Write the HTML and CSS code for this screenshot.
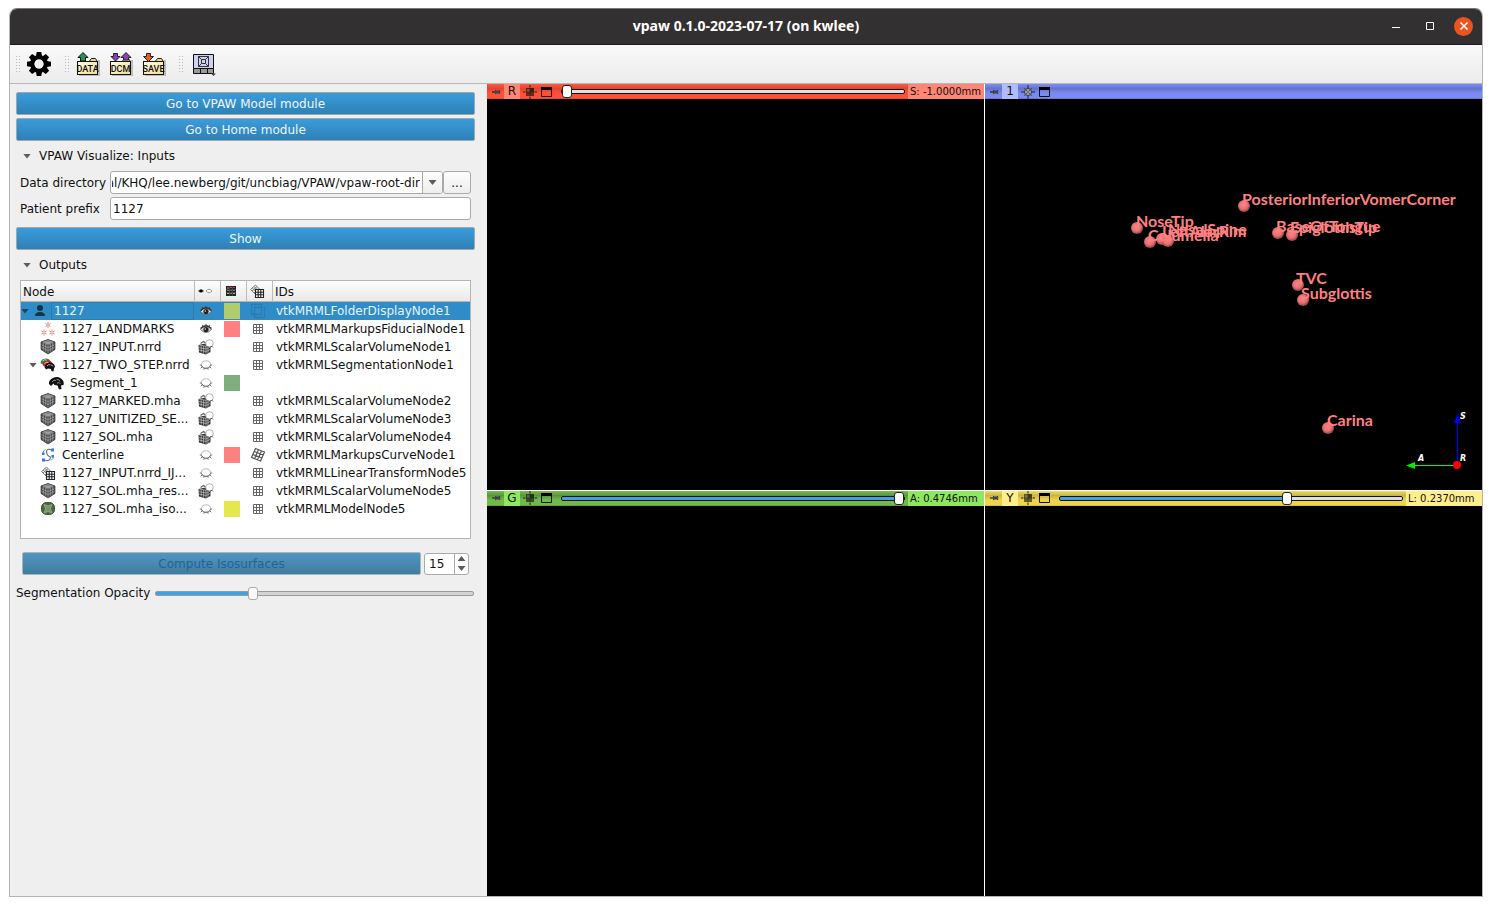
FILE: index.html
```html
<!DOCTYPE html>
<html lang="en">
<head>
<meta charset="utf-8">
<title>vpaw 0.1.0-2023-07-17 (on kwlee)</title>
<link rel="stylesheet" href="styles.css">
</head>
<body>
<svg class="defs" aria-hidden="true">
  <defs>
    <radialGradient id="bead" cx=".45" cy=".4" r=".6"><stop offset="0" stop-color="#ff8585"/><stop offset=".6" stop-color="#e87070"/><stop offset="1" stop-color="#8f4040"/></radialGradient>
    <linearGradient id="folder" x1="0" y1="0" x2="1" y2="1"><stop offset="0" stop-color="#fffbe0"/><stop offset="1" stop-color="#f0dc9a"/></linearGradient>
  </defs>
  <symbol id="i-folder" viewBox="0 0 24 24">
    <path d="M3 23h20v-15" stroke="#9a9a9a" stroke-width="2" fill="none" opacity=".6"/>
    <path d="M13.500 9l2-2.500h4l1.500 2.500" fill="#f0d878" stroke="#222"/>
    <rect x="1.500" y="9.500" width="20" height="13" fill="url(#folder)" stroke="#111"/>
  </symbol>
  <symbol id="i-cube" viewBox="0 0 16 16">
    <path d="M8 0.500l7 2.500v7.500L8 15 1 10.500V3z" fill="#484848"/>
    <path d="M8 0.500l7 2.500L8 6 1 3z" fill="#8a8a8a"/>
    <path d="M8 6v9M3.300 4v8M5.700 5v8.500M12.700 4v8M10.300 5v8.500M1 5.500l7 3.200L15 5.500M1 8l7 3.500 7-3.500M3.500 2.100l7 3M12.500 2.100l-7 3" stroke="#b0b0b0" stroke-width=".6" fill="none"/>
    <path d="M8 0.500l7 2.500v7.500L8 15 1 10.500V3z" fill="none" stroke="#333" stroke-width=".7"/>
  </symbol>
  <symbol id="i-vol" viewBox="0 0 16 16">
    <path d="M0.500 6l7-1.500 5 1.500v7L8 15.500 1 13.500z" fill="#333"/>
    <path d="M1 8.500l7 1.500 4-2M1 11l7 1.500 4-2M3.200 6.500v7M5.600 7v7.500M8 7v8.500M10 6.500v8M1 6l7 1.300L12 6" stroke="#c4c4c4" stroke-width=".7" fill="none"/>
    <path d="M2.500 4.500l3-2 2 1.500" stroke="#666" stroke-width="1.300" fill="none"/>
    <circle cx="11.500" cy="4.500" r="3.800" fill="#fff" stroke="#a0a0a0" stroke-width=".8"/>
    <path d="M8.500 7.500q3 2 6-.5M14 7.500l1 1" stroke="#555" fill="none" stroke-width=".9"/>
  </symbol>
  <symbol id="i-eye" viewBox="0 0 16 16">
    <path d="M2.500 8.500q5-6.500 11 0q-5.500 6-11 0z" fill="#ddd" stroke="#555" stroke-width=".8"/>
    <path d="M2.500 7.500q5.500-5.500 11 0M4 4.500l1 1.200M8 3.200v1.500M12 4.500l-1 1.200" fill="none" stroke="#333" stroke-width="1.200"/>
    <circle cx="8" cy="8.500" r="2.600" fill="#222"/><circle cx="7.300" cy="8" r=".8" fill="#ddd"/>
  </symbol>
  <symbol id="i-shut" viewBox="0 0 16 16">
    <ellipse cx="8" cy="7.500" rx="4.500" ry="3.700" fill="#fff" stroke="#b0b0b0" stroke-width=".9"/>
    <path d="M3.500 8.500q1 3 4.500 3t4.500-3M4 10l-1.300 1.300M6.300 11.300l-.5 1.500M9.700 11.300l.5 1.500M12 10l1.300 1.300M1.800 8h1.600M12.600 8h1.600" fill="none" stroke="#666" stroke-width=".9"/>
  </symbol>
  <symbol id="i-grid" viewBox="0 0 16 16">
    <path d="M3.500 3.500h9v9h-9zM6.500 3v10M9.500 3v10M3 6.500h10M3 9.500h10" fill="none" stroke="#666" stroke-width="1"/>
  </symbol>
  <symbol id="i-tilt" viewBox="0 0 16 16">
    <path d="M5.500 1.500l9 3.500-4 9-9-3.500zM8.500 2.700l-4 9M11.500 3.800l-4 9M4.200 4.500l9 3.500M2.800 7.500l9 3.500" fill="none" stroke="#555" stroke-width="1.200"/>
  </symbol>
  <symbol id="i-xform" viewBox="0 0 16 16">
    <path d="M1.500 6.500l5-4.500 5 5-5 4.500zM3.200 5l5 5M5 3.500l5 5M3 8l5-4.500M5 10l5-4.500" fill="#eee" stroke="#777" stroke-width=".9"/>
    <path d="M6.500 6.500h8v8h-8zM9.200 6.500v8M11.800 6.500v8M6.500 9.200h8M6.500 11.800h8" fill="#fff" stroke="#222" stroke-width="1.100"/>
  </symbol>
  <symbol id="i-xform-none" viewBox="0 0 16 16">
    <path d="M1.500 1.500h10v10h-10zM4.500 4.500h10v10h-10z" fill="none" stroke="#2a74a8" stroke-width="1.300" stroke-dasharray="2 1"/>
  </symbol>
  <symbol id="i-brain" viewBox="0 0 16 16">
    <path d="M1 9Q.5 5 5 3Q9 1 13 3.500q3.500 2.500 2.500 6.500l-2.500.5.500 3.500-2.500.5-1.500-4-3-.5L5.500 8.500 3 11z" fill="#111"/>
    <path d="M4 7q2-3 4-1.500M8.500 4.500q3-.5 3.500 2M9 8q2-1 3.500.5" fill="none" stroke="#bbb" stroke-width=".7"/>
  </symbol>
  <symbol id="i-seg" viewBox="0 0 16 16">
    <path d="M.5 6.500Q.5 2 5.500 1.500q4 0 5 3L7 7.500z" fill="#2f7d3b"/>
    <path d="M2.500 8Q3 4 7.500 3.500q4 0 5 3l-6 4.500z" fill="#c42222"/>
    <path d="M2.500 4q2-2 4-1M4.500 6.500q1.500-2 4-1" stroke="#eee" fill="none" stroke-width=".8"/>
    <path d="M4.500 10Q5.500 6 9.500 5.500q4.500 0 5.500 4l-1 2-.5 3-2-.5-.5-2-3-.5-2 1z" fill="#111"/>
    <path d="M7 9q2-2.500 3.500-1M11 8q1.500 0 2 1.500" fill="none" stroke="#ccc" stroke-width=".8"/>
  </symbol>
  <symbol id="i-marks" viewBox="0 0 16 16">
    <path d="M8 1v6M5.400 2.500l5.200 3M5.400 5.500l5.200-3M4 8.500v6M1.400 10l5.200 3M1.400 13l5.200-3M12 8.500v6M9.400 10l5.200 3M9.400 13l5.200-3" stroke="#f08a76" fill="none"/>
    <path d="M8 3.500v1M4 11v1M12 11v1" stroke="#fff"/>
  </symbol>
  <symbol id="i-curve" viewBox="0 0 16 16">
    <path d="M12.500 3Q6 1 6.500 5t4 5q0 5-6.500 3" fill="none" stroke="#777" stroke-width="1.300"/>
    <path d="M3.500 6.500q-1-3 2-4M12.500 8.500q2 3-1.500 5" fill="none" stroke="#5b93dd"/>
    <path d="M11 1.500h3v3h-3zM2 11.500h3v3H2zM2 5.500h2.500V8H2zM11.500 8h2.500v2.500h-2.500z" fill="#2f7ee8"/>
  </symbol>
  <symbol id="i-model" viewBox="0 0 16 16">
    <rect x="1.500" y="1.500" width="13" height="12" rx="5" fill="#46683f" stroke="#38522f"/>
    <path d="M4 3.500l4 1.500 4-1.500-1.500 4 1.500 4.500-4-1.500L4 12l1.500-4.500z" fill="#94b58a" fill-opacity=".6" stroke="#a9c0a0" stroke-width=".6"/>
  </symbol>
  <symbol id="i-person" viewBox="0 0 16 16"><circle cx="8" cy="5" r="3" fill="#17334a"/><path d="M3 13q0-4 5-4t5 4z" fill="#17334a"/></symbol>
  <symbol id="i-palette" viewBox="0 0 12 12"><path d="M1 1h10v10H1z" fill="#222"/><path d="M2 2h2v2H2zM8 2h2v1H8z" fill="#c33"/><path d="M5 2h2v1H5zM8 5h2v1H8z" fill="#a44aa4"/><path d="M5 5h2v1H5z" fill="#3a6fd0"/><path d="M2 5h2v1H2zM5 8h2v1H5z" fill="#3ea64a"/><path d="M2 8h2v1H2zM8 8h2v1H8z" fill="#cdb43a"/><path d="M4.500 1v10M7.500 1v10M1 4.500h10M1 7.500h10" stroke="#555" stroke-width=".6"/></symbol>
  <symbol id="i-pin" viewBox="0 0 10 10"><path d="M1 5h4" stroke="#333" stroke-width="1.300"/><path d="M4 2.500l1.500 1H8V3h1.200v4H8v-.5H5.500L4 7.500z" fill="#444"/></symbol>
  <symbol id="i-fit" viewBox="0 0 14 14"><path d="M7 0v2M7 12v2M0 7h2M12 7h2" stroke="#222"/><path d="M3 3h8v8H3z" fill="#000" fill-opacity=".55"/><path d="M7 3h4v4H7z" fill="#000" fill-opacity=".25"/><path d="M4 4h3v3H4z" fill="#fff" fill-opacity=".2"/><path d="M7 2v10M2 7h10" stroke="#222" stroke-width=".5"/></symbol>
  <symbol id="i-center" viewBox="0 0 14 14"><path d="M7 0v3M7 11v3M0 7h3M11 7h3" stroke="#222"/><circle cx="7" cy="7" r="3.500" fill="#aab" stroke="#333"/><path d="M3 3l8 8M11 3l-8 8" stroke="#444" stroke-width=".8"/><circle cx="7" cy="7" r="1.500" fill="#778"/></symbol>
  <symbol id="i-max" viewBox="0 0 12 12"><path d="M.5 1.500h10v9H.5z" fill="none" stroke="#111"/><path d="M0 1h11v3H0z" fill="#000"/></symbol>
</svg>

<main class="window">
  <header class="titlebar">
    <h1 class="title">vpaw 0.1.0-2023-07-17 (on kwlee)</h1>
    <div class="win-buttons">
      <button class="win-btn" aria-label="Minimize"><svg width="10" height="10"><path d="M1 6.500h8" stroke="#fff"/></svg></button>
      <button class="win-btn" aria-label="Maximize"><svg width="10" height="10"><path d="M1.500 1.500h7v7h-7z" fill="none" stroke="#fff"/></svg></button>
      <button class="win-btn close" aria-label="Close"><svg width="10" height="10"><path d="M1.500 1.500l7 7M8.500 1.500l-7 7" stroke="#fff" stroke-width="1.500"/></svg></button>
    </div>
  </header>

  <nav class="toolbar" aria-label="Main toolbar">
    <i class="grip"></i>
    <button class="tool gear" aria-label="Settings"><svg width="24" height="24" viewBox="0 0 24 24"><g fill="#000"><path id="tooth" d="M9.700 0h4.600l1 6h-6.600z"/><use href="#tooth" transform="rotate(45 12 12)"/><use href="#tooth" transform="rotate(90 12 12)"/><use href="#tooth" transform="rotate(135 12 12)"/><use href="#tooth" transform="rotate(180 12 12)"/><use href="#tooth" transform="rotate(225 12 12)"/><use href="#tooth" transform="rotate(270 12 12)"/><use href="#tooth" transform="rotate(315 12 12)"/></g><circle cx="12" cy="12" r="6.700" fill="none" stroke="#000" stroke-width="4.500"/><circle cx="12" cy="12" r="4.500" fill="#f2f2f2"/></svg></button>
    <i class="grip"></i>
    <button class="tool data" aria-label="Add data"><svg width="24" height="24" viewBox="0 0 24 24"><use href="#i-folder"/><path d="M7 .5l5 5H9.500v3.500h-5v-3.500H2z" fill="#2e8b57" stroke="#111"/><text x="11.500" y="20" class="cap">DATA</text></svg></button>
    <button class="tool" aria-label="DICOM"><svg width="24" height="24" viewBox="0 0 24 24"><use href="#i-folder"/><path d="M4.500 1.500h4v3H11L6.500 9 2 4.500h2.500zM17 .5l5 5h-2.500V8h-5V5.500H12z" fill="#8b3fb8" stroke="#222"/><text x="11.500" y="20" class="cap">DCM</text></svg></button>
    <button class="tool" aria-label="Save"><svg width="24" height="24" viewBox="0 0 24 24"><use href="#i-folder"/><path d="M4.500 1.500h4v3H11.500L6.500 9.500l-5-5h3z" fill="#e8601c" stroke="#222"/><text x="11.500" y="20" class="cap">SAVE</text></svg></button>
    <i class="grip late"></i>
    <button class="tool layout" aria-label="View layout"><svg width="24" height="24" viewBox="0 0 24 24"><path d="M1.500 2.500h20v14h-20z" fill="#cfd1f2" stroke="#111"/><path d="M1.500 16.500h20v5h-20zM8.500 16.500v5M15.500 16.500v5" fill="#999" stroke="#111"/><path d="M6.500 4.500h10v10h-10zM9.500 7.500h4v4h-4zM6.500 4.500l3 3M16.500 4.500l-3 3M6.500 14.500l3-3M16.500 14.500l-3-3" fill="none" stroke="#333"/><path d="M19 21.500h5L21.500 24z" fill="#444"/></svg></button>
  </nav>

  <div class="content">
    <section class="panel">
      <button class="btn">Go to VPAW Model module</button>
      <button class="btn">Go to Home module</button>

      <button class="section"><i class="tri"></i>VPAW Visualize: Inputs</button>
      <div class="fields">
        <label for="dir">Data directory</label>
        <div class="dir-row">
          <div class="combo"><input id="dir" type="text" value="al/KHQ/lee.newberg/git/uncbiag/VPAW/vpaw-root-dir"><button aria-label="Recent directories"><i class="tri"></i></button></div>
          <button class="browse" aria-label="Browse">...</button>
        </div>
        <label for="prefix">Patient prefix</label>
        <input id="prefix" class="box" type="text" value="1127">
      </div>
      <button class="btn show">Show</button>

      <button class="section"><i class="tri"></i>Outputs</button>
      <div class="tree">
        <table>
          <colgroup><col class="c-node"><col class="c-icon"><col class="c-icon"><col class="c-icon"><col></colgroup>
          <thead><tr><th>Node</th>
            <th class="ic" aria-label="Visibility"><svg width="16" height="16" viewBox="0 0 16 16"><path d="M1 8q3-3.500 6 0q-3 3-6 0z" fill="#444"/><circle cx="4" cy="8" r="1.300" fill="#000"/><path d="M9 8q3-3.500 6 0q-3 3.500-6 0z" fill="#fff" stroke="#999"/></svg></th>
            <th class="ic" aria-label="Color"><svg width="12" height="12"><use href="#i-palette"/></svg></th>
            <th class="ic" aria-label="Transform"><svg width="16" height="16"><use href="#i-xform"/></svg></th><th>IDs</th></tr></thead>
          <tbody>
            <tr class="sel"><td><div class="node l0"><i class="tri"></i><svg><use href="#i-person"/></svg><span>1127</span></div></td><td class="ic"><svg><use href="#i-eye"/></svg></td><td class="ic"><i class="sw olive"></i></td><td class="ic"><svg><use href="#i-xform-none"/></svg></td><td>vtkMRMLFolderDisplayNode1</td></tr>
            <tr><td><div class="node"><svg><use href="#i-marks"/></svg><span>1127_LANDMARKS</span></div></td><td class="ic"><svg><use href="#i-eye"/></svg></td><td class="ic"><i class="sw pink"></i></td><td class="ic"><svg><use href="#i-grid"/></svg></td><td>vtkMRMLMarkupsFiducialNode1</td></tr>
            <tr><td><div class="node"><svg><use href="#i-cube"/></svg><span>1127_INPUT.nrrd</span></div></td><td class="ic"><svg><use href="#i-vol"/></svg></td><td></td><td class="ic"><svg><use href="#i-grid"/></svg></td><td>vtkMRMLScalarVolumeNode1</td></tr>
            <tr><td><div class="node open"><i class="tri"></i><svg><use href="#i-seg"/></svg><span>1127_TWO_STEP.nrrd</span></div></td><td class="ic"><svg><use href="#i-shut"/></svg></td><td></td><td class="ic"><svg><use href="#i-grid"/></svg></td><td>vtkMRMLSegmentationNode1</td></tr>
            <tr><td><div class="node l2"><svg><use href="#i-brain"/></svg><span>Segment_1</span></div></td><td class="ic"><svg><use href="#i-shut"/></svg></td><td class="ic"><i class="sw green"></i></td><td></td><td></td></tr>
            <tr><td><div class="node"><svg><use href="#i-cube"/></svg><span>1127_MARKED.mha</span></div></td><td class="ic"><svg><use href="#i-vol"/></svg></td><td></td><td class="ic"><svg><use href="#i-grid"/></svg></td><td>vtkMRMLScalarVolumeNode2</td></tr>
            <tr><td><div class="node"><svg><use href="#i-cube"/></svg><span>1127_UNITIZED_SE...</span></div></td><td class="ic"><svg><use href="#i-vol"/></svg></td><td></td><td class="ic"><svg><use href="#i-grid"/></svg></td><td>vtkMRMLScalarVolumeNode3</td></tr>
            <tr><td><div class="node"><svg><use href="#i-cube"/></svg><span>1127_SOL.mha</span></div></td><td class="ic"><svg><use href="#i-vol"/></svg></td><td></td><td class="ic"><svg><use href="#i-grid"/></svg></td><td>vtkMRMLScalarVolumeNode4</td></tr>
            <tr><td><div class="node"><svg><use href="#i-curve"/></svg><span>Centerline</span></div></td><td class="ic"><svg><use href="#i-shut"/></svg></td><td class="ic"><i class="sw pink"></i></td><td class="ic"><svg><use href="#i-tilt"/></svg></td><td>vtkMRMLMarkupsCurveNode1</td></tr>
            <tr><td><div class="node"><svg><use href="#i-xform"/></svg><span>1127_INPUT.nrrd_IJ...</span></div></td><td class="ic"><svg><use href="#i-shut"/></svg></td><td></td><td class="ic"><svg><use href="#i-grid"/></svg></td><td>vtkMRMLLinearTransformNode5</td></tr>
            <tr><td><div class="node"><svg><use href="#i-cube"/></svg><span>1127_SOL.mha_res...</span></div></td><td class="ic"><svg><use href="#i-vol"/></svg></td><td></td><td class="ic"><svg><use href="#i-grid"/></svg></td><td>vtkMRMLScalarVolumeNode5</td></tr>
            <tr><td><div class="node"><svg><use href="#i-model"/></svg><span>1127_SOL.mha_iso...</span></div></td><td class="ic"><svg><use href="#i-shut"/></svg></td><td class="ic"><i class="sw yellow"></i></td><td class="ic"><svg><use href="#i-grid"/></svg></td><td>vtkMRMLModelNode5</td></tr>
          </tbody>
        </table>
      </div>

      <div class="compute">
        <button class="btn" disabled>Compute Isosurfaces</button>
        <div class="spin"><input type="text" inputmode="numeric" value="15" aria-label="Isosurface value"><span class="steps"><button aria-label="Increase"><i class="tri up"></i></button><button aria-label="Decrease"><i class="tri"></i></button></span></div>
      </div>
      <div class="opacity">
        <label for="opacity">Segmentation Opacity</label>
        <input id="opacity" class="slider light" type="range" min="0" max="100" value="30" style="--fill:30%">
      </div>
    </section>

    <section class="views">
      <article class="view red">
        <div class="bar">
          <svg class="pin"><use href="#i-pin"/></svg><b class="tag">R</b><button aria-label="Fit slice"><svg width="14" height="14"><use href="#i-fit"/></svg></button><button aria-label="Maximize view"><svg width="12" height="12"><use href="#i-max"/></svg></button>
          <input class="slider" type="range" aria-label="Slice offset R" min="0" max="100" value="0" style="--fill:0%"><output>S: -1.0000mm</output>
        </div>
        <div class="stage"></div>
      </article>
      <article class="view blue">
        <div class="bar">
          <svg class="pin"><use href="#i-pin"/></svg><b class="tag">1</b><button aria-label="Center view"><svg width="14" height="14"><use href="#i-center"/></svg></button><button aria-label="Maximize view"><svg width="12" height="12"><use href="#i-max"/></svg></button>
        </div>
        <div class="stage">
          <svg class="scene" role="img" aria-label="Airway landmarks">
            <g fill="url(#bead)"><circle cx="152" cy="129" r="6"/><circle cx="177" cy="140" r="6"/><circle cx="183" cy="142" r="6"/><circle cx="165" cy="143" r="6"/><circle cx="259" cy="107" r="6"/><circle cx="293" cy="134" r="6"/><circle cx="307" cy="136" r="6"/><circle cx="313" cy="186" r="6"/><circle cx="318" cy="201" r="6"/><circle cx="343" cy="329" r="6"/></g>
            <g class="marks"><text x="151" y="128">NoseTip</text><text x="177" y="138">LeftAlarRim</text><text x="183" y="136">NasalSpine</text><text x="163" y="142">Columella</text><text x="257" y="106">PosteriorInferiorVomerCorner</text><text x="291" y="133">BaseOfTongue</text><text x="305" y="134">EpiglottisTip</text><text x="311" y="185">TVC</text><text x="316" y="200">Subglottis</text><text x="342" y="327">Carina</text></g>
          </svg>
          <svg class="axes" width="64" height="60" viewBox="0 0 64 60" role="img" aria-label="Orientation axes">
            <path d="M53.500 8v46" stroke="#00f"/><path d="M53.500 3l3.500 9h-7z" fill="#00e"/><path d="M10 54.500h43" stroke="#0f0"/><path d="M2 54.500l9-3.500v7z" fill="#0e0"/><circle cx="53" cy="54" r="4" fill="#f00"/>
            <text x="56" y="8">S</text><text x="14" y="50">A</text><text x="56" y="50">R</text>
          </svg>
        </div>
      </article>
      <article class="view grn">
        <div class="bar">
          <svg class="pin"><use href="#i-pin"/></svg><b class="tag">G</b><button aria-label="Fit slice"><svg width="14" height="14"><use href="#i-fit"/></svg></button><button aria-label="Maximize view"><svg width="12" height="12"><use href="#i-max"/></svg></button>
          <input class="slider" type="range" aria-label="Slice offset G" min="0" max="100" value="100" style="--fill:100%"><output>A: 0.4746mm</output>
        </div>
        <div class="stage"></div>
      </article>
      <article class="view yel">
        <div class="bar">
          <svg class="pin"><use href="#i-pin"/></svg><b class="tag">Y</b><button aria-label="Fit slice"><svg width="14" height="14"><use href="#i-fit"/></svg></button><button aria-label="Maximize view"><svg width="12" height="12"><use href="#i-max"/></svg></button>
          <input class="slider" type="range" aria-label="Slice offset Y" min="0" max="100" value="67" style="--fill:67%"><output>L: 0.2370mm</output>
        </div>
        <div class="stage"></div>
      </article>
    </section>
  </div>
</main>
</body>
</html>
```

FILE: styles.css
```css
* { box-sizing: border-box; }
body {
  margin: 0;
  padding: 8px 9px 9px;
  height: 100vh;
  background: #fff;
  color: #111;
  font: 12px/18px "DejaVu Sans", sans-serif;
}
button, input { font: inherit; color: inherit; margin: 0; padding: 0; }
button { border: 0; background: none; }
svg { display: block; flex: none; }
.defs { position: absolute; width: 0; height: 0; }

.window {
  display: flex;
  flex-direction: column;
  height: 100%;
  border: 1px solid #b4b4b4;
  border-top-color: #777;
  border-radius: 8px 8px 0 0;
  overflow: hidden;
  background: #efefef;
}

.titlebar {
  display: grid;
  grid-template-columns: 1fr auto 1fr;
  align-items: center;
  height: 36px;
  padding: 0 9px 1px;
  background: #333031;
  border-bottom: 1px solid #1e1c1d;
  color: #fff;
}
.title { grid-column: 2; margin: 0; font: bold 14px/20px "Noto Sans", sans-serif; }
.win-buttons { display: flex; justify-content: flex-end; align-items: center; gap: 15px; }
.win-btn { display: grid; place-items: center; width: 19px; height: 19px; border-radius: 50%; }
.win-btn.close { background: #e95420; }

.toolbar {
  display: flex;
  align-items: center;
  height: 39px;
  padding: 0 5px;
  background: linear-gradient(#f9f9f9, #ececec);
  border-bottom: 1px solid #b8b8b8;
}
.grip { width: 5px; height: 18px; background: radial-gradient(circle, #bbb 1px, transparent 1px) 0 0 / 3px 3px; }
.tool { display: flex; }
.tool.gear { margin: 0 13px 0 7px; }
.tool.data { margin-left: 7px; }
.tool + .tool { margin-left: 9px; }
.grip.late { margin: 0 9px 0 12px; }
.cap { font: 500 9px Roboto, sans-serif; fill: #111; text-anchor: middle; }

.content { display: flex; flex: 1; min-height: 0; }

.panel { display: flex; flex-direction: column; width: 477px; padding: 8px 12px 0 6px; }
.btn {
  height: 23px;
  border: 1px solid #9fa5a9;
  border-radius: 2px;
  background: linear-gradient(#3a9cdb, #2d81b6);
  color: #eef5fa;
}
.btn + .btn { margin-top: 3px; }
.btn:disabled { background: linear-gradient(#5096c2, #417c9f); color: #1e6596; border-color: #a9b4bb; }
.section { display: flex; align-items: center; gap: 8px; height: 30px; padding-left: 7px; text-align: left; }
.tri { flex: none; width: 8px; height: 5px; background: #5c5c5c; clip-path: polygon(0 0, 100% 0, 50% 100%); }
.tri.up { clip-path: polygon(0 100%, 100% 100%, 50% 0); }

.fields { display: grid; grid-template-columns: 90px 1fr; align-items: center; row-gap: 3px; padding: 0 4px; }
.dir-row { display: flex; }
.box, .combo, .browse, .spin { height: 23px; border: 1px solid #aaa; border-radius: 3px; background: #fff; }
.box { width: 100%; padding: 0 2px; }
.combo { display: flex; flex: 1; min-width: 0; }
.combo input { flex: 1; min-width: 0; margin: 0 2px 0 1px; border: 0; background: none; direction: rtl; }
.combo button { display: grid; place-items: center; width: 20px; border-left: 1px solid #aaa; background: linear-gradient(#fdfdfd, #eee); border-radius: 0 3px 3px 0; }
.browse { width: 28px; background: linear-gradient(#fdfdfd, #eee); }
.show { margin-top: 7px; }

.tree { height: 259px; margin: 0 4px; border: 1px solid #b4b4b4; background: #fff; overflow: hidden; }
table { width: 100%; table-layout: fixed; border-collapse: separate; border-spacing: 0; }
.c-node { width: 173px; }
.c-icon { width: 26px; }
th { height: 21px; padding: 1px 2px 0; font-weight: normal; text-align: left; background: linear-gradient(#fdfdfd, #e9e9e9); border-bottom: 1px solid #b4b4b4; }
th + th { border-left: 1px solid #bbb; }
td { height: 18px; padding: 0; white-space: nowrap; }
td:last-child { padding-left: 4px; }
td.ic { padding: 0 2px 0 0; }
th.ic { padding: 0 5px 0 0; }
.ic > * { margin: 0 auto; }
td svg { width: 16px; height: 16px; }
.node { display: flex; align-items: center; height: 18px; padding-left: 19px; }
.node span { padding-left: 6px; }
.node.open { padding-left: 8px; }
.node.open .tri { margin-right: 3px; }
.node.l0 { padding-left: 0; }
.node.l0 .tri { margin-right: 3px; background: #174563; }
.node.l0 span { flex: 1; margin-left: 3px; padding-left: 2px; border: 1px solid #2a7db3; line-height: 16px; }
.node.l2 { padding-left: 27px; }
.sel { background: #308cc6; color: #e6f2fa; }
.sw { display: block; width: 16px; height: 16px; }
.olive { background: #b0cc6f; }
.pink { background: #ff8080; }
.green { background: #80ae80; }
.yellow { background: #e6e64d; }

.compute { display: flex; align-items: center; gap: 3px; margin: 13px 6px 0; }
.compute .btn { flex: 1; }
.spin { display: flex; width: 45px; height: 22px; }
.spin input { width: 29px; border: 0; padding: 1px 0 0 4px; background: none; }
.steps { display: flex; flex-direction: column; flex: 1; border-left: 1px solid #aaa; }
.steps button { display: grid; place-items: center; flex: 1; }
.opacity { display: flex; align-items: center; gap: 5px; height: 20px; margin: 8px 1px 0 0; }

.slider { -webkit-appearance: none; appearance: none; flex: 1; min-width: 0; height: 13px; background: none; }
.slider::-webkit-slider-runnable-track {
  height: 5px;
  border: 1px solid #111;
  border-radius: 2px;
  background: linear-gradient(90deg, #3ea3e6 var(--fill), #e0e0e0 var(--fill));
}
.slider::-webkit-slider-thumb {
  -webkit-appearance: none;
  width: 10px;
  height: 13px;
  margin-top: -5px;
  border: 1px solid #222;
  border-radius: 3px;
  background: #fff;
}
.slider.light::-webkit-slider-runnable-track { border-color: #999; background: linear-gradient(90deg, #3ea3e6 var(--fill), #d4d4d4 var(--fill)); }
.slider.light::-webkit-slider-thumb { border-color: #aaa; background: #fafafa; }

.views { display: grid; flex: 1; grid-template-columns: 1fr 1fr; grid-template-rows: 1fr 1fr; gap: 1px; min-width: 0; background: #fff; }
.view { display: flex; flex-direction: column; min-width: 0; min-height: 0; }
.bar { display: flex; align-items: center; height: 15px; padding-left: 4px; font-size: 10px; line-height: 15px; background: linear-gradient(var(--hi), var(--lo) 30%, var(--mid) 60%, var(--mid) 90%, var(--lo)); }
.pin { width: 10px; height: 10px; }
.tag { width: 16px; margin: 0 3px; text-align: center; font-size: 12px; font-weight: normal; background: var(--tag); }
.bar button + button { margin: 0 8px 0 4px; }
.bar output { width: 76px; margin-left: 3px; padding-left: 2px; white-space: nowrap; background: var(--out); }
.red { --hi: #ff5a43; --lo: #e04430; --mid: #ff5038; --tag: #ff8675; --out: #ff8675; }
.blue { --hi: #7d8df5; --lo: #6274cc; --mid: #7a8af2; --tag: #b1bcff; }
.grn { --hi: #79bd52; --lo: #5a963c; --mid: #72b84b; --tag: #8de75f; --out: #8de75f; }
.yel { --hi: #eedc67; --lo: #cdb545; --mid: #edd54c; --tag: #ffef8c; --out: #ffef8c; }
.stage { position: relative; flex: 1; min-height: 0; background: #000; overflow: hidden; }
.scene { width: 100%; height: 100%; }
.marks { fill: #ff8080; font: bold 16px Lato, sans-serif; }
.axes { position: absolute; right: 14px; bottom: 19px; overflow: visible; }
.axes text { fill: #fff; font: italic bold 8px "DejaVu Sans", sans-serif; }
```
